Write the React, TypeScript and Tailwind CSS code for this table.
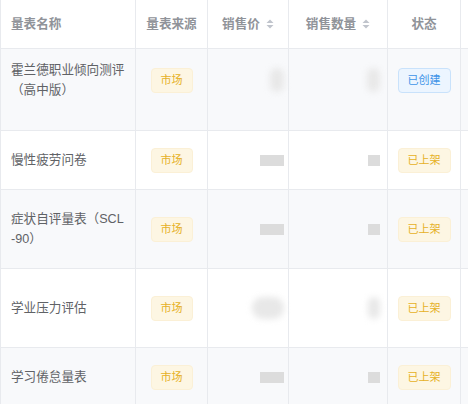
import React from "react";

type Blot = { w: number; h: number; soft?: boolean; pr: number };

type Row = {
  name: string[];
  status: "created" | "listed";
  price: Blot;
  qty: Blot;
  h: string;
  shift?: string;
  bg: string;
};

const rows: Row[] = [
  {
    name: ["霍兰德职业倾向测评", "（高中版）"],
    status: "created",
    price: { w: 14, h: 24, soft: true, pr: 4 },
    qty: { w: 13, h: 24, soft: true, pr: 7 },
    h: "h-[82px]",
    shift: "pb-[19px]",
    bg: "bg-[#f8f9fb]",
  },
  {
    name: ["慢性疲劳问卷"],
    status: "listed",
    price: { w: 24, h: 11, pr: 4 },
    qty: { w: 12, h: 11, pr: 7 },
    h: "h-[59px]",
    bg: "bg-white",
  },
  {
    name: ["症状自评量表（SCL", "-90）"],
    status: "listed",
    price: { w: 24, h: 11, pr: 4 },
    qty: { w: 12, h: 11, pr: 7 },
    h: "h-[79px]",
    bg: "bg-[#f8f9fb]",
  },
  {
    name: ["学业压力评估"],
    status: "listed",
    price: { w: 32, h: 22, soft: true, pr: 4 },
    qty: { w: 12, h: 22, soft: true, pr: 7 },
    h: "h-[79px]",
    bg: "bg-white",
  },
  {
    name: ["学习倦怠量表"],
    status: "listed",
    price: { w: 24, h: 11, pr: 4 },
    qty: { w: 12, h: 11, pr: 7 },
    h: "h-[59px]",
    bg: "bg-[#f8f9fb]",
  },
];

const grid = "grid grid-cols-[136px_72px_81px_99px_73px_120px]";
const cell = "border-r border-b border-[#e8eaee] flex items-center";

const SortIcon = () => (
  <svg width="8" height="10" viewBox="0 0 8 10" className="ml-[6px]">
    <path d="M0.5 4 L4 0.5 L7.5 4 Z" fill="#c0c4cc" />
    <path d="M0.5 6 L7.5 6 L4 9.5 Z" fill="#c0c4cc" />
  </svg>
);

const Masked = ({ b }: { b: Blot }) => (
  <span
    className={b.soft ? "rounded-full bg-[#e8e8e8] blur-[3px]" : "bg-[#dcdcdc]"}
    style={{ width: b.w, height: b.h, marginRight: b.pr }}
  />
);

const Tag = ({ kind }: { kind: "market" | "created" | "listed" }) => {
  if (kind === "created")
    return (
      <span className="rounded-[4px] border border-[#c9e2fb] bg-[#ecf5ff] px-[9px] text-[11px] leading-[23px] text-[#3f94e8]">
        已创建
      </span>
    );
  return (
    <span className="rounded-[4px] border border-[#fbf0d6] bg-[#fdf6e3] px-[9px] text-[11px] leading-[23px] text-[#e6b126]">
      {kind === "market" ? "市场" : "已上架"}
    </span>
  );
};

export default function App() {
  return (
    <div
      className="h-[404px] w-[468px] overflow-hidden bg-white"
      style={{ fontFamily: '"Liberation Sans", "Noto Sans CJK SC", sans-serif' }}
    >
      <div className="w-[600px]">
        <div className={`${grid} h-[49px] bg-white text-[12.6px] font-semibold text-[#909399]`}>
          <div className={`${cell} border-l pl-[10px]`}>量表名称</div>
          <div className={`${cell} justify-center`}>量表来源</div>
          <div className={`${cell} justify-center`}>
            销售价
            <SortIcon />
          </div>
          <div className={`${cell} justify-center`}>
            销售数量
            <SortIcon />
          </div>
          <div className={`${cell} justify-center`}>状态</div>
          <div className={cell} />
        </div>

        {rows.map((r, i) => (
          <div key={i} className={`${grid} ${r.h} ${r.bg} text-[12.6px] text-[#606266]`}>
            <div className={`${cell} border-l pl-[10px] ${r.shift ?? ""}`}>
              <div className="leading-[20px]">
                {r.name.map((line, j) => (
                  <div key={j} className="whitespace-nowrap">
                    {line}
                  </div>
                ))}
              </div>
            </div>
            <div className={`${cell} justify-center ${r.shift ?? ""}`}>
              <Tag kind="market" />
            </div>
            <div className={`${cell} justify-end ${r.shift ?? ""}`}>
              <Masked b={r.price} />
            </div>
            <div className={`${cell} justify-end ${r.shift ?? ""}`}>
              <Masked b={r.qty} />
            </div>
            <div className={`${cell} justify-center ${r.shift ?? ""}`}>
              <Tag kind={r.status} />
            </div>
            <div className={cell} />
          </div>
        ))}
      </div>
    </div>
  );
}
